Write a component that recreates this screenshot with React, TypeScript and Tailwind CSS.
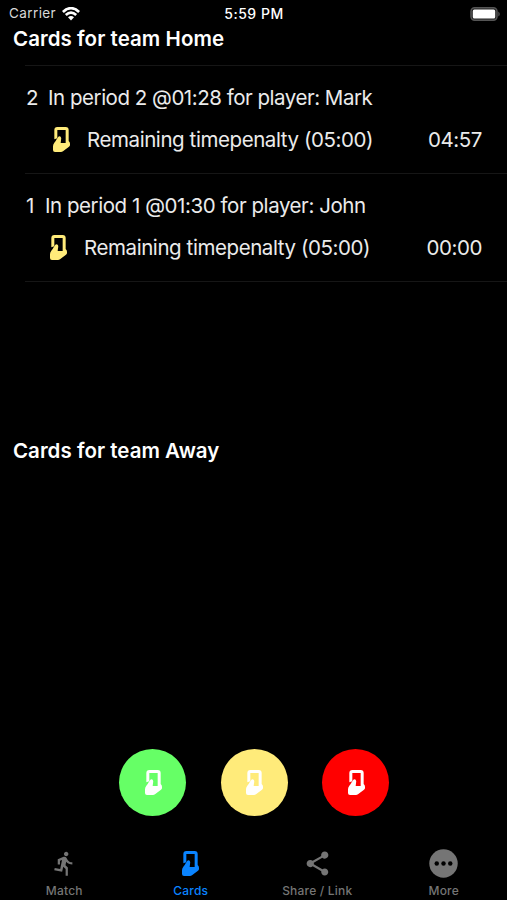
import React from "react";
import { MdDirectionsRun, MdShare } from "react-icons/md";

function CardIcon({ className }: { className: string }) {
  return (
    <svg viewBox="0 0 51 75" className={className} fill="currentColor" aria-hidden="true">
      <path d="M4 37V9Q4 0 13 0H38Q47 0 47 9V51H38V9H13V34Z" />
      <path d="M11 37L15 31Q18 26 23 29Q26 32 24 40L23 48H40L46 42Q51 44 51 50V55Q50 58 47 60L30 73Q27 75 24 75H6Q0 75 0 69V58Q0 52 4 47L8 42Z" />
    </svg>
  );
}

interface Penalty {
  number: string;
  title: string;
  titleClass: string;
  remaining: string;
  rowClass: string;
}

const penalties: Penalty[] = [
  { number: "2", title: "In period 2 @01:28 for player: Mark", titleClass: "ml-[10px] tracking-[-0.48px]", remaining: "04:57", rowClass: "pl-[27px]" },
  { number: "1", title: "In period 1 @01:30 for player: John", titleClass: "ml-[11px] tracking-[-0.44px]", remaining: "00:00", rowClass: "pl-[24px]" },
];

function PenaltyRow({ item }: { item: Penalty }) {
  return (
    <li className="h-[108px] border-b border-[#161616] pt-[18px] pl-px text-[20.5px] leading-7 tracking-[-0.42px] text-[#ebebeb]">
      <div className="flex">
        <span>{item.number}</span>
        <span className={item.titleClass}>{item.title}</span>
      </div>
      <div className={`mt-[14px] flex items-center pr-[25px] ${item.rowClass}`}>
        <CardIcon className="mb-[2px] h-[25px] w-[17px] text-[#ffeb7a]" />
        <span className="ml-[17px]">Remaining timepenalty (05:00)</span>
        <span className="ml-auto">{item.remaining}</span>
      </div>
    </li>
  );
}

export default function App() {
  return (
    <div className="flex h-[900px] w-[507px] flex-col overflow-hidden bg-black font-['Inter','Liberation_Sans',sans-serif] whitespace-nowrap text-white">
      <header className="grid h-[27px] grid-cols-3 items-center pr-[6px] pl-[9px] text-[13.5px] leading-[27px]">
        <div className="flex items-center gap-[6px] text-[#d8d8d8]">
          <span className="tracking-[0.4px]">Carrier</span>
          <svg viewBox="0 0 18 14" className="h-[14px] w-[18px] text-white" fill="none" stroke="currentColor" strokeWidth="2.7" aria-hidden="true">
            <path d="M.9 5Q9-2.6 17.1 5M3.8 8Q9 3.2 14.2 8" />
            <path d="M6 10.3Q9 7.7 12 10.3L9 13.5Z" fill="currentColor" stroke="none" />
          </svg>
        </div>
        <span className="pt-px pr-[2px] text-center text-[14px] leading-[26px] font-medium tracking-[0.5px]">5:59 PM</span>
        <svg viewBox="0 0 31 14" className="h-[14px] w-[31px] justify-self-end" aria-hidden="true">
          <rect x="1" y=".8" width="26" height="12.4" rx="3.6" fill="#222" stroke="#555" strokeWidth="1.5" />
          <rect x="2.8" y="2.5" width="22.4" height="9" rx="1.6" fill="#fff" />
          <path d="M28.4 4.4Q31 7 28.4 9.6Z" fill="#606060" />
        </svg>
      </header>

      <section className="h-[412px]">
        <h2 className="pl-[13px] text-[20.5px] leading-[23px] font-semibold tracking-[0.05px]">Cards for team Home</h2>
        <ul className="mt-[15px] ml-[25px] border-t border-[#161616]">
          {penalties.map((item) => (
            <PenaltyRow key={item.number} item={item} />
          ))}
        </ul>
      </section>

      <section className="flex-1">
        <h2 className="pl-[13px] text-[20.5px] leading-[23px] font-semibold tracking-[0.02px]">Cards for team Away</h2>
      </section>

      <div className="mb-[34px] flex gap-[34.5px] pl-[119px] text-white">
        <button aria-label="Green card" className="flex size-[67px] items-center justify-center rounded-full bg-[#66ff66] pl-px">
          <CardIcon className="h-[25px] w-[17px]" />
        </button>
        <button aria-label="Yellow card" className="flex size-[67px] items-center justify-center rounded-full bg-[#ffeb7a] pl-px">
          <CardIcon className="h-[25px] w-[17px]" />
        </button>
        <button aria-label="Red card" className="flex size-[67px] items-center justify-center rounded-full bg-[#ff0000] pl-px">
          <CardIcon className="h-[25px] w-[17px]" />
        </button>
      </div>

      <nav className="grid h-[50px] grid-cols-4 pl-px text-[12px] leading-4 font-medium tracking-[0.2px] text-[#757575]">
        <div className="flex flex-col items-center">
          <div className="flex h-[27px] items-center"><MdDirectionsRun className="size-[27px]" /></div>
          <span className="mt-[6px]">Match</span>
        </div>
        <div className="flex flex-col items-center text-[#0a84ff]">
          <div className="flex h-[27px] items-center"><CardIcon className="h-[25px] w-[17px]" /></div>
          <span className="mt-[6px]">Cards</span>
        </div>
        <div className="flex flex-col items-center">
          <div className="flex h-[27px] items-center"><MdShare className="size-[29px]" /></div>
          <span className="mt-[6px]">Share / Link</span>
        </div>
        <div className="flex flex-col items-center">
          <div className="flex h-[27px] items-center">
            <svg viewBox="0 0 30 30" className="size-[29px]" aria-hidden="true">
              <circle cx="15" cy="15" r="14.7" fill="currentColor" />
              <circle cx="8" cy="15" r="2.3" fill="#000" />
              <circle cx="15" cy="15" r="2.3" fill="#000" />
              <circle cx="22" cy="15" r="2.3" fill="#000" />
            </svg>
          </div>
          <span className="mt-[6px]">More</span>
        </div>
      </nav>
    </div>
  );
}
